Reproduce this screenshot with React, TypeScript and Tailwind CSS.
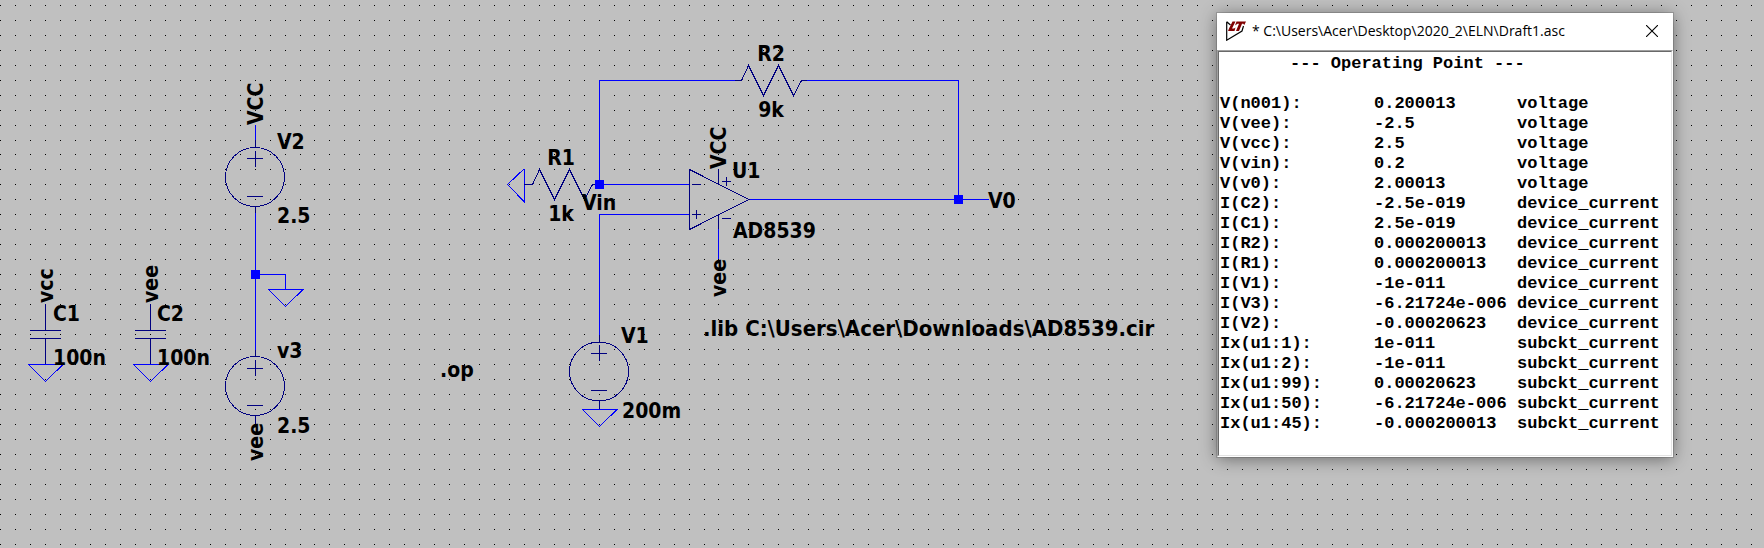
type Label = { x: number; y: number; text: string; middle?: boolean; up?: boolean };

const labels: Label[] = [
  { x: 53, y: 303, text: "vcc", up: true },
  { x: 53, y: 321, text: "C1" },
  { x: 53, y: 365, text: "100n" },
  { x: 158, y: 303, text: "vee", up: true },
  { x: 157, y: 321, text: "C2" },
  { x: 157, y: 365, text: "100n" },
  { x: 263, y: 125, text: "VCC", up: true },
  { x: 277, y: 149, text: "V2" },
  { x: 277, y: 223, text: "2.5" },
  { x: 277, y: 358, text: "v3" },
  { x: 277, y: 433, text: "2.5" },
  { x: 263, y: 461, text: "vee", up: true },
  { x: 771, y: 61, text: "R2", middle: true },
  { x: 771, y: 117, text: "9k", middle: true },
  { x: 561, y: 165, text: "R1", middle: true },
  { x: 561, y: 221, text: "1k", middle: true },
  { x: 599, y: 210, text: "Vin", middle: true },
  { x: 726, y: 169, text: "VCC", up: true },
  { x: 732, y: 178, text: "U1" },
  { x: 733, y: 238, text: "AD8539" },
  { x: 726, y: 297, text: "vee", up: true },
  { x: 988, y: 208, text: "V0" },
  { x: 621, y: 343, text: "V1" },
  { x: 622, y: 418, text: "200m" },
  { x: 440, y: 377, text: ".op" },
];

const directive = { x: 703, y: 336, text: ".lib C:\\Users\\Acer\\Downloads\\AD8539.cir" };

const wires = [
  "M255.5 125V140M255.5 213V350M255.5 274.5H285.5V289",
  "M599.5 180V80.5H735M807 80.5H958.5V199.5M748 199.5H989",
  "M599.5 184.5H689M689 214.5H599.5V335M718.5 229V259",
  "M268 289.5H303L285.5 306.5L268.5 289.5",
  "M29 364.5H63L45.5 381.5L28.5 364.5",
  "M134 364.5H168L150.5 381.5L133.5 364.5",
  "M582 409.5H617L599.5 426.5L582.5 409.5",
  "M524.5 169V202L507.5 184.5L524.5 168.5",
].join("");

const symbols = [
  "M45.5 304V330M30 330.5H61M30 338.5H61M45.5 338V364",
  "M150.5 304V330M135 330.5H166M135 338.5H166M150.5 338V364",
  "M255.5 140V147M247 158.5H263M255.5 151V167M247 196.5H263M255.5 207V213",
  "M255.5 350V356M247 368.5H263M255.5 360V376M247 405.5H263M255.5 416V424",
  "M599.5 335V342M591 353.5H607M599.5 345V361M591 390.5H607M599.5 401V409",
  "M735 80.5H741.5L748.5 65.5L763.5 95.5L778.5 65.5L793.5 95.5L801.5 80.5H807",
  "M524 184.5H532.5L539.5 169.5L554.5 199.5L569.5 169.5L584.5 199.5L592.5 184.5H599",
  "M689.5 169.5V229.5L749 199.5L689.5 169.5M718.5 169V184M718.5 214V229",
  "M692 184.5H701M692 214.5H701M696.5 210V219",
  "M722 181.5H731M726.5 177V186M722 218.5H731",
].join("");

const sources = [
  [255, 177],
  [255, 386],
  [599, 371.5],
];

const junctions = [
  [251, 270],
  [595, 180],
  [954, 195],
];

// 27 grid steps cover 404 pixels, so the last steps of each tile sit one pixel closer.
const gridRow = (y: number, shiftFrom: number) =>
  Array.from({ length: 27 }, (_, n) => `M${n * 15 - (n >= shiftFrom ? 1 : 0)} ${y}h1v1h-1z`).join("");
const gridDots = Array.from({ length: 27 }, (_, n) => gridRow(n * 15 - (n >= 10 ? 1 : 0), 21)).join("");

const rows: [string, string, string][] = [
  ["V(n001):", "0.200013", "voltage"],
  ["V(vee):", "-2.5", "voltage"],
  ["V(vcc):", "2.5", "voltage"],
  ["V(vin):", "0.2", "voltage"],
  ["V(v0):", "2.00013", "voltage"],
  ["I(C2):", "-2.5e-019", "device_current"],
  ["I(C1):", "2.5e-019", "device_current"],
  ["I(R2):", "0.000200013", "device_current"],
  ["I(R1):", "0.000200013", "device_current"],
  ["I(V1):", "-1e-011", "device_current"],
  ["I(V3):", "-6.21724e-006", "device_current"],
  ["I(V2):", "-0.00020623", "device_current"],
  ["Ix(u1:1):", "1e-011", "subckt_current"],
  ["Ix(u1:2):", "-1e-011", "subckt_current"],
  ["Ix(u1:99):", "0.00020623", "subckt_current"],
  ["Ix(u1:50):", "-6.21724e-006", "subckt_current"],
  ["Ix(u1:45):", "-0.000200013", "subckt_current"],
];

function Schematic() {
  return (
    <svg className="block h-[548px] min-h-screen w-full" role="img" aria-label="Schematic">
      <defs>
        <pattern id="grid" x="0" y="5" width="404" height="404" patternUnits="userSpaceOnUse">
          <path d={gridDots} fill="#000" shapeRendering="crispEdges" />
        </pattern>
      </defs>
      <rect width="100%" height="100%" fill="url(#grid)" />
      <g fill="none" strokeWidth="1" shapeRendering="crispEdges">
        <path d={wires} stroke="#0000ff" />
        <path d={symbols} stroke="#000080" />
        {sources.map(([cx, cy]) => (
          <circle key={`${cx}-${cy}`} cx={cx} cy={cy} r="29.5" stroke="#000080" />
        ))}
      </g>
      {junctions.map(([x, y]) => (
        <rect key={x} x={x} y={y} width="9" height="9" fill="#0000ff" />
      ))}
      <g className="font-['DejaVu_Sans_Condensed','Noto_Sans',sans-serif] text-[21px] font-bold">
        {labels.map((l, i) => (
          <text
            key={i}
            x={l.up ? 0 : l.x}
            y={l.up ? 0 : l.y}
            transform={l.up ? `translate(${l.x} ${l.y}) rotate(-90)` : undefined}
            textAnchor={l.middle ? "middle" : "start"}
          >
            {l.text}
          </text>
        ))}
        <text x={directive.x} y={directive.y} className="text-[22px]">
          {directive.text}
        </text>
      </g>
    </svg>
  );
}

function AppIcon() {
  return (
    <svg className="size-5 shrink-0" viewBox="0 0 20 20" aria-hidden="true">
      <path d="M0.7 0.8V19.2L16 10L17.5 5M0.7 0.8L4.5 4" fill="none" stroke="#000" strokeWidth="1.2" />
      <path d="M6.5 0.5H9.5L6 7.5H8L9.5 6.5L8.5 10H2L3 7.5Z" fill="#800000" />
      <path d="M10.5 0.5H20L18.3 4L17.3 2.8H16L13 10H10L13 2.8H11.5L9 4.5Z" fill="#800000" />
    </svg>
  );
}

function ResultWindow() {
  return (
    <section
      aria-label="Operating point results"
      className="absolute left-[1217px] top-[13px] w-[456px] bg-white shadow-[0_2px_16px_rgba(0,0,0,0.45),0_0_0_1px_rgba(120,120,120,0.4)]"
    >
      <header className="flex h-[37px] items-center gap-1.5 pb-px pl-[9px] pr-[15px]">
        <AppIcon />
        <h1 className="flex-1 whitespace-nowrap font-['Open_Sans','Noto_Sans',sans-serif] text-[14px] leading-5 text-black">
          * C:\Users\Acer\Desktop\2020_2\ELN\Draft1.asc
        </h1>
        <button type="button" aria-label="Close">
          <svg className="size-3" viewBox="0 0 12 12" aria-hidden="true">
            <path d="M0 0L12 12M12 0L0 12" stroke="#000" strokeWidth="1.1" />
          </svg>
        </button>
      </header>
      <div className="border-b border-r border-white border-l border-l-[#a0a0a0] border-t border-t-[#a0a0a0]">
        <div className="border border-b-[#e3e3e3] border-l-[#696969] border-r-[#e3e3e3] border-t-[#696969] pb-[21px] pl-px pt-0.5">
          <table className="w-full table-fixed border-collapse text-left font-['Liberation_Mono',monospace] text-[17px] font-bold leading-5 text-black">
            <caption className="whitespace-pre pb-5 pl-[70px] text-left">--- Operating Point ---</caption>
            <colgroup>
              <col className="w-[154px]" />
              <col className="w-[143px]" />
              <col />
            </colgroup>
            <tbody>
              {rows.map(([name, value, kind]) => (
                <tr key={name}>
                  <th scope="row" className="p-0">{name}</th>
                  <td className="p-0">{value}</td>
                  <td className="p-0">{kind}</td>
                </tr>
              ))}
            </tbody>
          </table>
        </div>
      </div>
    </section>
  );
}

export default function App() {
  return (
    <main className="relative min-h-screen overflow-hidden bg-[#c0c0c0]">
      <Schematic />
      <ResultWindow />
    </main>
  );
}
